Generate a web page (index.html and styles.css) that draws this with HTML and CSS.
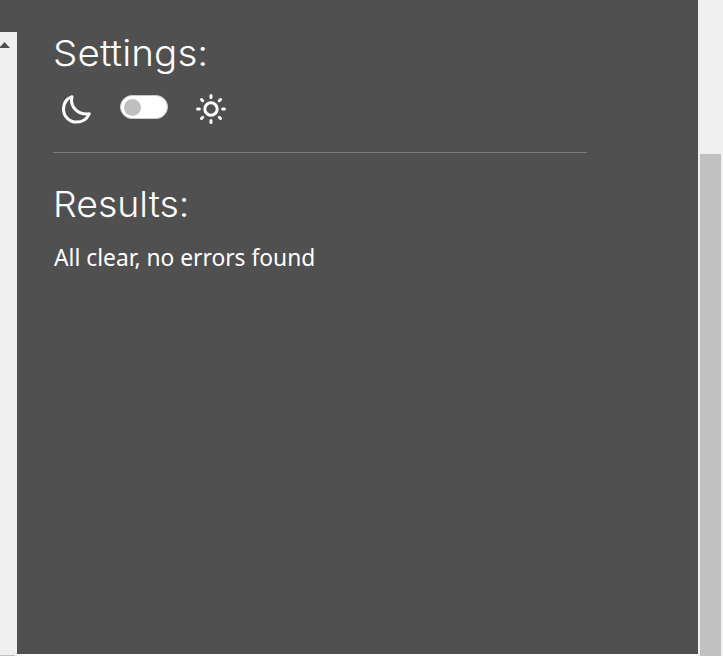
FILE: index.html
```html
<!DOCTYPE html>
<html lang="en">
<head>
<meta charset="utf-8">
<title>Settings</title>
<link rel="stylesheet" href="styles.css">
</head>
<body>
<div class="page">
  <div class="editor-scroll">
    <svg class="arrow" width="10" height="6" viewBox="0 0 10 6"><path d="M-1 6 4.5 0 10 6Z"/></svg>
    <div class="corner"></div>
  </div>
  <main class="panel">
    <section class="settings">
      <h2><span class="title settings-title">Settings:</span></h2>
      <div class="theme">
        <svg class="icon" width="32" height="32" viewBox="0 0 32 32"><path d="M12 3.7C6 6.2 3.5 10.5 3.5 15.9c0 7.5 5.8 13.2 13.2 13.2 5.6 0 9.9-2.7 12.6-8.3C19 22.3 9.2 14.6 12 3.7Z"/></svg>
        <div class="toggle"><div class="knob"></div></div>
        <svg class="icon" width="32" height="32" viewBox="0 0 32 32"><circle cx="16" cy="16" r="6.2"/><path d="M16 2.6v1.8M16 27.6v1.8M2.6 16h1.8M27.6 16h1.8M6.5 6.5l1.2 1.2M24.3 24.3l1.2 1.2M6.5 25.5l1.2-1.2M24.3 7.7l1.2-1.2"/></svg>
      </div>
    </section>
    <section class="results">
      <h2><span class="title results-title">Results:</span></h2>
      <p><span class="title message">All clear, no errors found</span></p>
    </section>
  </main>
  <div class="page-scroll"><div class="thumb"></div></div>
</div>
</body>
</html>
```
FILE: styles.css
```css
* { box-sizing: border-box; }
body { margin: 0; background: #fff; overflow: hidden; }
.page { display: grid; grid-template-columns: 17px 681px 25px; height: 656px; }
.editor-scroll { display: flex; flex-direction: column; justify-content: space-between; background: #f0f0f0; border-top: 32px solid #505050; padding-top: 10px; }
.arrow { display: block; fill: #505050; }
.corner { width: 15px; height: 1px; background: #c1c1c1; }
.panel { height: 654px; padding: 30px 111px 0 36px; background: #505050; color: #fff; }
.settings { height: 123px; border-bottom: 1px solid #7b7b7b; }
h2 { margin: 0; height: 47px; font: 300 36px/47px Inter, "Open Sans", sans-serif; white-space: nowrap; }
.title { display: inline-block; transform-origin: left; }
.settings-title { letter-spacing: 0.1px; transform: scaleX(1.07); }
.results-title { letter-spacing: 0; transform: scaleX(1.04); }
.theme { display: flex; align-items: center; height: 32px; margin-top: 16px; padding-left: 7px; }
.icon { fill: none; stroke: #fff; stroke-width: 3; stroke-linejoin: round; stroke-linecap: round; }
.toggle { width: 48px; height: 24px; margin: -4px 27px 0 28px; border-radius: 12px; background: #fff; border: 1px solid #ccc; padding: 3px; }
.knob { width: 17px; height: 17px; border-radius: 50%; background: #bfbfbf; }
.results { padding-top: 28px; }
p { margin: 13px 0 0 1px; font: 400 24px/32px "Noto Sans", "Open Sans", sans-serif; white-space: nowrap; }
.message { transform: scaleX(0.949); }
.page-scroll { background: #f0f0f0; padding: 154px 2px 0; }
.thumb { height: 502px; width: 21px; background: #c1c1c1; }
```
